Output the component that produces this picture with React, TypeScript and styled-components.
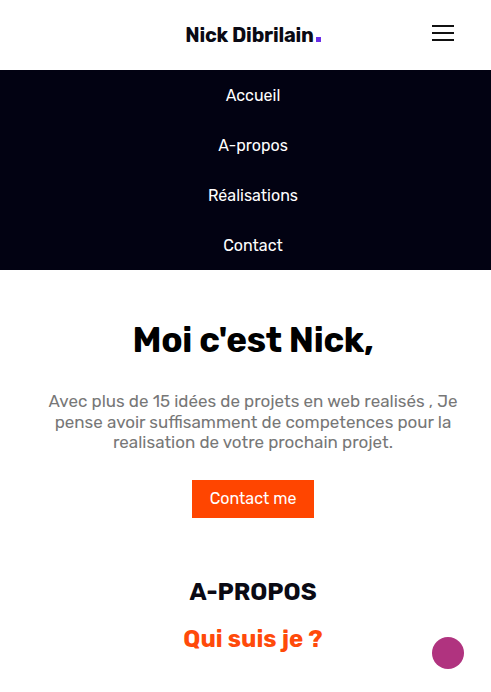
import React from "react";
import styled, { createGlobalStyle } from "styled-components";

const Global = createGlobalStyle`
  html, body { margin: 0; padding: 0; background: #fff; }
  body { font-family: Rubik, Inter, "Noto Sans", sans-serif; }
  * { box-sizing: border-box; }
`;

const Header = styled.header`
  height: 70px;
  display: flex;
  align-items: center;
  justify-content: center;
  position: relative;
  padding-left: 15px;
`;

const Logo = styled.div`
  font-size: 20px;
  font-weight: 700;
  color: #0a0a14;
  letter-spacing: -0.2px;
`;

const Dot = styled.span`
  display: inline-block;
  width: 5px;
  height: 5px;
  background: #6a2ee8;
  margin-left: 2px;
`;

const Burger = styled.button`
  position: absolute;
  right: 37px;
  top: 25px;
  width: 22px;
  height: 16px;
  border: none;
  background: none;
  padding: 0;
  display: flex;
  flex-direction: column;
  justify-content: space-between;
  cursor: pointer;
`;

const Bar = styled.span`
  display: block;
  height: 2px;
  background: #111;
`;

const Nav = styled.nav`
  background: #020212;
  display: flex;
  flex-direction: column;
  padding-left: 15px;
`;

const NavItem = styled.a`
  height: 50px;
  display: flex;
  align-items: center;
  justify-content: center;
  color: #fff;
  font-size: 16px;
  text-decoration: none;
`;

const Hero = styled.section`
  display: flex;
  flex-direction: column;
  align-items: center;
  padding: 49px 0 0 15px;
  text-align: center;
`;

const Title = styled.h1`
  margin: 0;
  font-size: 35px;
  font-weight: 700;
  color: #000;
  letter-spacing: -0.3px;
`;

const Text = styled.p`
  margin: 30px 0 0;
  font-size: 17px;
  line-height: 20.5px;
  color: #777;
  max-width: 430px;
  font-weight: 400;
`;

const Button = styled.button`
  margin-top: 27px;
  width: 122px;
  height: 38px;
  background: #ff4500;
  color: #fff;
  border: none;
  font-family: inherit;
  font-size: 16px;
`;

const About = styled.section`
  display: flex;
  flex-direction: column;
  align-items: center;
  padding: 60px 0 0 15px;
`;

const Label = styled.h2`
  margin: 0;
  font-size: 24px;
  font-weight: 700;
  color: #0a0a14;
`;

const Sub = styled.h3`
  margin: 19px 0 0;
  font-size: 24px;
  font-weight: 700;
  color: #ff4a0a;
`;

const Bubble = styled.div`
  position: fixed;
  left: 432px;
  top: 637px;
  width: 32px;
  height: 32px;
  border-radius: 50%;
  background: #b0337f;
`;

export default function App() {
  return (
    <>
      <Global />
      <Header>
        <Logo>
          Nick Dibrilain<Dot />
        </Logo>
        <Burger aria-label="menu">
          <Bar />
          <Bar />
          <Bar />
        </Burger>
      </Header>
      <Nav>
        <NavItem href="#">Accueil</NavItem>
        <NavItem href="#">A-propos</NavItem>
        <NavItem href="#">Réalisations</NavItem>
        <NavItem href="#">Contact</NavItem>
      </Nav>
      <Hero>
        <Title>Moi c'est Nick,</Title>
        <Text>
          Avec plus de 15 idées de projets en web realisés , Je pense avoir
          suffisamment de competences pour la realisation de votre prochain
          projet.
        </Text>
        <Button>Contact me</Button>
      </Hero>
      <About>
        <Label>A-PROPOS</Label>
        <Sub>Qui suis je ?</Sub>
      </About>
      <Bubble />
    </>
  );
}
